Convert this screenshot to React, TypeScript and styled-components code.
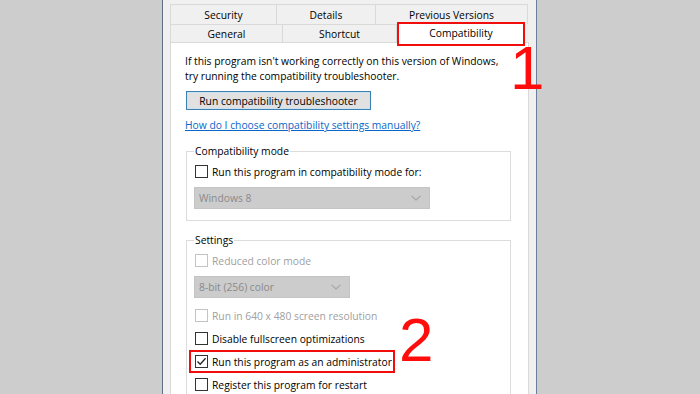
import styled, { createGlobalStyle } from 'styled-components';

const GlobalStyle = createGlobalStyle`
  html, body {
    margin: 0;
    padding: 0;
    background: #cdcdcd;
    overflow: hidden;
  }
  * { box-sizing: border-box; }
`;

const UI_FONT = `"Open Sans", "Noto Sans", "Liberation Sans", sans-serif`;

const Page = styled.div`
  width: 700px;
  height: 394px;
  background: #cdcdcd;
  padding-left: 162px;
  position: relative;
  overflow: hidden;
`;

const Window = styled.div`
  width: 375px;
  height: 394px;
  background: #f0f0f0;
  border-left: 1px solid #5d6f86;
  border-right: 1px solid #6b7f98;
  padding: 4px 7px 0 7px;
  display: flex;
  flex-direction: column;
  font-family: ${UI_FONT};
  font-size: 10.3px;
  color: #000;
`;

const TabRow = styled.div<{ h: number }>`
  display: flex;
  flex: none;
  height: ${(p) => p.h}px;
  position: relative;
  z-index: 1;
`;

const Tab = styled.div<{ w: number }>`
  width: ${(p) => p.w}px;
  flex: none;
  display: flex;
  align-items: center;
  justify-content: center;
  background: #f0f0f0;
  border: 1px solid #d9d9d9;
  border-bottom: none;
  margin-left: -1px;
  &:first-child { margin-left: 0; }
`;

const SelectedTab = styled.div`
  width: 128px;
  height: 24px;
  margin-top: -2px;
  flex: none;
  display: flex;
  align-items: center;
  justify-content: center;
  background: #fff;
  border: 2px solid #f20d0d;
  padding-bottom: 2px;
`;

const Panel = styled.div`
  flex: 1;
  min-height: 0;
  background: #fff;
  border: 1px solid #d9d9d9;
  border-bottom: none;
  padding: 11px 17px 0 14px;
  display: flex;
  flex-direction: column;
  align-items: flex-start;
`;

const Intro = styled.p`
  margin: 0;
  line-height: 15px;
`;

const Button = styled.div`
  margin: 7px 0 0 1px;
  width: 185px;
  height: 19px;
  flex: none;
  background: #e1e1e1;
  border: 1px solid #3c7fb1;
  box-shadow: inset 0 0 0 1px #cde3f2;
  display: flex;
  align-items: center;
  justify-content: center;
`;

const Link = styled.span`
  margin-top: 8px;
  line-height: 15px;
  color: #0a66c8;
  text-decoration: underline;
`;

const Group = styled.fieldset<{ mt: number; pb: number }>`
  margin: ${(p) => p.mt}px 0 0 1px;
  width: 325px;
  flex: none;
  border: 1px solid #dcdcdc;
  padding: 5px 8px ${(p) => p.pb}px 8px;
  min-width: 0;
  display: flex;
  flex-direction: column;
  align-items: flex-start;
`;

const Legend = styled.legend`
  padding: 0 1px;
  margin-left: -1px;
  line-height: 15px;
`;

const CheckRow = styled.div<{ disabled?: boolean }>`
  display: flex;
  align-items: center;
  height: 15px;
  gap: 4px;
  white-space: nowrap;
  color: ${(p) => (p.disabled ? '#a0a0a0' : '#000')};
`;

const Highlight = styled.div`
  border: 2px solid #f20d0d;
  padding: 2px 4px;
  margin: -4px 0 -4px -6px;
  width: 206px;
`;

const Box = styled.span<{ disabled?: boolean }>`
  width: 13px;
  height: 13px;
  flex: none;
  border: 1px solid ${(p) => (p.disabled ? '#c4c4c4' : '#333')};
  background: #fff;
  display: flex;
  align-items: center;
  justify-content: center;
`;

const Select = styled.div<{ w: number; mt: number }>`
  margin-top: ${(p) => p.mt}px;
  margin-left: -1px;
  width: ${(p) => p.w}px;
  height: 22px;
  flex: none;
  background: #cccccc;
  border: 1px solid #c4c4c4;
  color: #8a8a8a;
  display: flex;
  align-items: center;
  justify-content: space-between;
  padding: 0 8px 0 4px;
`;

const RowStack = styled.div`
  margin-top: 10px;
  display: flex;
  flex-direction: column;
  gap: 8px;
`;

const Marker = styled.div<{ left: number; top: number }>`
  position: absolute;
  left: ${(p) => p.left}px;
  top: ${(p) => p.top}px;
  font-family: "Liberation Sans", Arial, sans-serif;
  font-size: 62px;
  line-height: 62px;
  color: #ff0d0d;
`;

function Check({ checked, disabled }: { checked?: boolean; disabled?: boolean }) {
  return (
    <Box disabled={disabled}>
      {checked && (
        <svg width="11" height="11" viewBox="0 0 11 11">
          <path d="M1.5 5.5 L4.2 8.3 L9.6 2.2" fill="none" stroke="#222" strokeWidth="1.3" />
        </svg>
      )}
    </Box>
  );
}

function Chevron() {
  return (
    <svg width="10" height="6" viewBox="0 0 10 6">
      <path d="M0.5 0.8 L5 5 L9.5 0.8" fill="none" stroke="#a6a6a6" strokeWidth="1.1" />
    </svg>
  );
}

export default function App() {
  return (
    <Page>
      <GlobalStyle />
      <Window>
        <TabRow h={20}>
          <Tab w={107}>Security</Tab>
          <Tab w={100}>Details</Tab>
          <Tab w={153}>Previous Versions</Tab>
        </TabRow>
        <TabRow h={18}>
          <Tab w={113}>General</Tab>
          <Tab w={115}>Shortcut</Tab>
          <SelectedTab>Compatibility</SelectedTab>
        </TabRow>
        <Panel>
          <Intro>
            If this program isn't working correctly on this version of Windows,
            <br />
            try running the compatibility troubleshooter.
          </Intro>
          <Button>Run compatibility troubleshooter</Button>
          <Link>How do I choose compatibility settings manually?</Link>

          <Group mt={11} pb={11}>
            <Legend>Compatibility mode</Legend>
            <CheckRow>
              <Check />
              Run this program in compatibility mode for:
            </CheckRow>
            <Select w={236} mt={8}>
              Windows 8
              <Chevron />
            </Select>
          </Group>

          <Group mt={12} pb={20}>
            <Legend>Settings</Legend>
            <CheckRow disabled>
              <Check disabled />
              Reduced color mode
            </CheckRow>
            <Select w={156} mt={8}>
              8-bit (256) color
              <Chevron />
            </Select>
            <RowStack>
              <CheckRow disabled>
                <Check disabled />
                Run in 640 x 480 screen resolution
              </CheckRow>
              <CheckRow>
                <Check />
                Disable fullscreen optimizations
              </CheckRow>
              <Highlight>
                <CheckRow>
                  <Check checked />
                  Run this program as an administrator
                </CheckRow>
              </Highlight>
              <CheckRow>
                <Check />
                Register this program for restart
              </CheckRow>
            </RowStack>
          </Group>
        </Panel>
      </Window>
      <Marker left={510} top={37}>1</Marker>
      <Marker left={399} top={309}>2</Marker>
    </Page>
  );
}
